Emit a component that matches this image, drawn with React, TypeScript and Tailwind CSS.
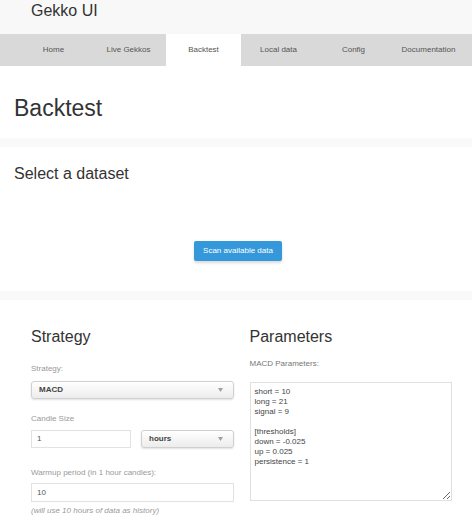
import React from 'react';

const tabs = ['Home', 'Live Gekkos', 'Backtest', 'Local data', 'Config', 'Documentation'];

const Arrow = () => (
  <svg width="5" height="4" viewBox="0 0 5 4" className="shrink-0">
    <path d="M0 0h5L2.5 4z" fill="#a0a0a0" />
  </svg>
);

const FakeSelect: React.FC<{ value: string; className?: string }> = ({ value, className = '' }) => (
  <div
    className={`h-[18px] flex items-center justify-between pl-[7px] pr-[10px] rounded-[3px] border border-[#d0d0d0] bg-gradient-to-b from-white to-[#ececec] shadow-[0_1px_2px_rgba(0,0,0,0.12)] ${className}`}
  >
    <span className="text-[8px] leading-none font-bold text-[#444]">{value}</span>
    <Arrow />
  </div>
);

const FakeInput: React.FC<{ value: string; className?: string }> = ({ value, className = '' }) => (
  <div className={`h-[18px] flex items-center pl-[5px] border border-[#e2e2e2] bg-white ${className}`}>
    <span className="text-[8px] leading-none text-[#555]">{value}</span>
  </div>
);

const params = `short = 10
long = 21
signal = 9

[thresholds]
down = -0.025
up = 0.025
persistence = 1`;

export default function App() {
  return (
    <div className="w-[472px] min-h-[522px] bg-white text-[#333] font-['Liberation_Sans',Arial,sans-serif]">
      <header className="bg-[#f8f8f8]">
        <div className="h-[34px] pl-[31px] pt-[3px]">
          <h1 className="text-[16px] leading-none text-[#333]">Gekko UI</h1>
        </div>
        <nav className="h-[32px] bg-[#d9d9d9] flex pl-4">
          {tabs.map(t => (
            <div
              key={t}
              className={`w-[75px] flex items-center justify-center text-[8px] leading-none text-[#555] ${
                t === 'Backtest' ? 'bg-white' : ''
              }`}
            >
              {t}
            </div>
          ))}
        </nav>
      </header>

      <div className="h-[72px] pl-[14px] pt-[31px]">
        <h2 className="text-[23px] leading-none">Backtest</h2>
      </div>
      <div className="h-[9px] bg-[#f9f9f9]" />

      <section className="h-[144px] pl-[14px] pr-[10px] pt-[19px]">
        <h3 className="text-[16px] leading-none">Select a dataset</h3>
        <div className="flex justify-center mt-[59px]">
          <button className="w-[88px] h-[20px] rounded-[2px] bg-[#3498db] text-white text-[8px] leading-none shadow-[0_2px_3px_rgba(0,0,0,0.15)]">
            Scan available data
          </button>
        </div>
      </section>
      <div className="h-[9px] bg-[#f9f9f9]" />

      <section className="pl-[31px] pr-[20px] pt-[29px] grid grid-cols-2 gap-x-4">
        <div>
          <h3 className="text-[16px] leading-none">Strategy</h3>
          <div className="mt-[20px] text-[8px] leading-none text-[#999]">Strategy:</div>
          <FakeSelect value="MACD" className="mt-[8px]" />
          <div className="mt-[16px] text-[8px] leading-none text-[#999]">Candle Size</div>
          <div className="mt-[7px] flex">
            <FakeInput value="1" className="w-[100px]" />
            <FakeSelect value="hours" className="flex-1 ml-[10px]" />
          </div>
          <div className="mt-[21px] text-[8px] leading-none text-[#999]">Warmup period (in 1 hour candles):</div>
          <FakeInput value="10" className="mt-[6px] h-[19px]" />
          <div className="mt-[5px] text-[8px] leading-none italic text-[#999]">(will use 10 hours of data as history)</div>
        </div>
        <div>
          <h3 className="text-[16px] leading-none">Parameters</h3>
          <div className="mt-[15px] text-[8px] leading-none text-[#777]">MACD Parameters:</div>
          <textarea
            readOnly
            defaultValue={params}
            className="mt-[14px] block w-full h-[119px] border border-[#e0e0e0] pl-[4px] pt-[4px] text-[8px] leading-[10px] text-[#444] outline-none"
          />
        </div>
      </section>
    </div>
  );
}
